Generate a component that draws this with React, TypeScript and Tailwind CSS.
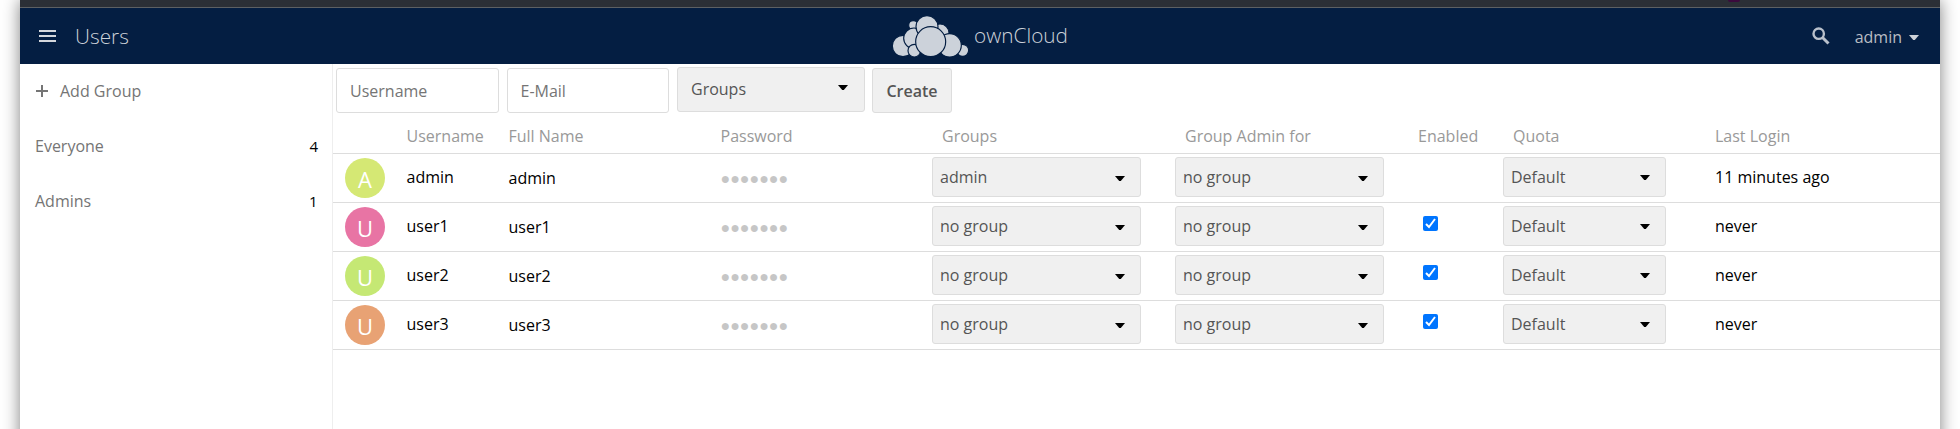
import React from "react";

const users = [
  { name: "admin", initial: "A", color: "bg-[#d5e874]", group: "admin", toggle: false, login: "11 minutes ago" },
  { name: "user1", initial: "U", color: "bg-[#e874a4]", group: "no group", toggle: true, login: "never" },
  { name: "user2", initial: "U", color: "bg-[#c5e874]", group: "no group", toggle: true, login: "never" },
  { name: "user3", initial: "U", color: "bg-[#e8a274]", group: "no group", toggle: true, login: "never" },
];

const columns = "grid grid-cols-[73.5px_102px_212px_211.5px_243px_243px_85px_212px_1fr]";

function Caret({ className = "" }: { className?: string }) {
  return (
    <svg className={`h-[5px] w-[10px] shrink-0 ${className}`} viewBox="0 0 10 5" fill="currentColor">
      <path d="M0 0h10L5.8 5H4.2z" />
    </svg>
  );
}

function Select({ label, width, caret = "mt-[3px]" }: { label: string; width: string; caret?: string }) {
  return (
    <div className={`mt-[3px] flex h-10 items-center justify-between rounded-[3px] border border-[#ddd] bg-[#f0f0f0] pr-[15px] pl-[7px] text-[#555] ${width}`}>
      <span>{label}</span>
      <Caret className={`text-black ${caret}`} />
    </div>
  );
}

function Logo() {
  return (
    <svg className="-mt-px h-[50px] w-[84px]" viewBox="0 0 252 150" fill="#ccd2da" stroke="#041e42" strokeWidth="3.5">
      <circle cx="73" cy="43" r="14" />
      <circle cx="153" cy="66" r="27" />
      <circle cx="221" cy="118" r="18" />
      <circle cx="182" cy="103" r="35" />
      <circle cx="42" cy="105" r="32" />
      <circle cx="75" cy="82" r="31" />
      <circle cx="76" cy="119" r="19" />
      <circle cx="114" cy="47" r="33" />
      <circle cx="125" cy="92" r="45" />
    </svg>
  );
}

export default function App() {
  return (
    <div className="h-[429px] overflow-hidden bg-white px-5 font-['Open_Sans',sans-serif] text-base leading-6 text-black">
      <div className="flex h-[449px] flex-col bg-white shadow-[0_0_16px_rgba(0,0,0,0.5)]">
        <div className="flex h-2 shrink-0 justify-end border-b border-[#5d6063] bg-[#2b2f36] pr-[200px]">
          <div className="h-[2px] w-3 rounded-b bg-[#3b0a3d]" />
        </div>
        <header className="flex h-14 shrink-0 items-center bg-[#041e42] pr-[21px] pl-[19px] text-[#cdd2d9]">
          <div className="flex flex-1 items-center">
            <div className="flex w-[17px] flex-col gap-[3px]">
              <div className="h-[2px] bg-[#d4d7dc]" />
              <div className="h-[2px] bg-[#d4d7dc]" />
              <div className="h-[2px] bg-[#d4d7dc]" />
            </div>
            <h1 className="ml-[19px] text-[20.8px] font-light">Users</h1>
          </div>
          <div className="flex items-center pr-px">
            <Logo />
            <span className="ml-px -mt-[3px] text-[20.8px] font-light">ownCloud</span>
          </div>
          <div className="flex flex-1 items-center justify-end">
            <svg className="h-[18px] w-[18px]" viewBox="0 0 18 18" fill="none" stroke="#b9c0cb">
              <circle cx="6.7" cy="6.7" r="5.2" strokeWidth="2.4" />
              <path d="M10.5 10.5L16.5 16.5" strokeWidth="3" />
            </svg>
            <span className="ml-[25px] pt-px text-[#b9bcc2]">admin</span>
            <Caret className="mt-[3px] ml-[7px]" />
          </div>
        </header>
        <div className="flex flex-1">
          <aside className="w-[313px] border-r border-[#eee] text-[#757575]">
            <div className="flex h-[54px] items-center pl-4">
              <svg className="h-3 w-3" viewBox="0 0 12 12" fill="#757575">
                <path d="M5 0h2v5h5v2H7v5H5V7H0V5h5z" />
              </svg>
              <span className="ml-3">Add Group</span>
            </div>
            <div className="flex h-[55px] items-center justify-between pr-[14px] pl-[15px]">
              <span>Everyone</span>
              <span className="pt-px text-[15px] text-black">4</span>
            </div>
            <div className="flex h-[55px] items-center justify-between pr-[14.5px] pl-[15px]">
              <span>Admins</span>
              <span className="pt-px text-[15px] text-black">1</span>
            </div>
          </aside>
          <main className="flex-1">
            <div className="flex h-[55px] items-start pt-[3px] pl-[3px]">
              <div className="mt-px flex h-[45px] w-[163px] items-center rounded-[3px] border border-[#ddd] pl-[13px] text-[#757575]">Username</div>
              <div className="mt-px ml-2 flex h-[45px] w-[162px] items-center rounded-[3px] border border-[#ddd] pl-[12.5px] text-[#757575]">E-Mail</div>
              <div className="ml-2 flex h-[45px] w-[188px] items-center justify-between rounded-[3px] border border-[#ddd] bg-[#f0f0f0] pr-4 pb-[2px] pl-[13px] text-[#555]">
                Groups
                <Caret className="-mt-[2px] text-black" />
              </div>
              <button className="mt-px ml-[7px] h-[45px] w-20 rounded-[3px] border border-[#ddd] bg-[#f0f0f0] font-semibold text-[#555]">Create</button>
            </div>
            <div className={`${columns} h-[35px] border-b border-[#ddd] pt-[5px] text-[#999]`}>
              <span />
              <span>Username</span>
              <span>Full Name</span>
              <span>Password</span>
              <span className="pl-[10px]">Groups</span>
              <span className="pl-[10px]">Group Admin for</span>
              <span>Enabled</span>
              <span className="pl-[10px]">Quota</span>
              <span>Last Login</span>
            </div>
            {users.map((user) => (
              <div key={user.name} className={`${columns} h-[49px] border-b border-[#ddd]`}>
                <div className={`mt-1 ml-3 flex size-10 items-center justify-center rounded-full pt-px text-[22px] text-white ${user.color}`}>{user.initial}</div>
                <span className="pt-[11px]">{user.name}</span>
                <span className="pt-3">{user.name}</span>
                <span className="pt-3 text-[#c6c6c6]">●●●●●●●</span>
                <Select label={user.group} width="w-[209px]" />
                <Select label="no group" width="w-[209px]" />
                <div className="pt-[13px] pl-[5px]">
                  {user.toggle && (
                    <svg className="h-[15px] w-[15px]" viewBox="0 0 15 15" fill="none">
                      <rect width="15" height="15" rx="2" fill="#0075ff" />
                      <path d="M3 8l3 3 6-8" stroke="#fff" strokeWidth="2" />
                    </svg>
                  )}
                </div>
                <Select label="Default" width="w-[163px]" caret="mt-[1px]" />
                <span className="pt-[11px]">{user.login}</span>
              </div>
            ))}
          </main>
        </div>
      </div>
    </div>
  );
}
